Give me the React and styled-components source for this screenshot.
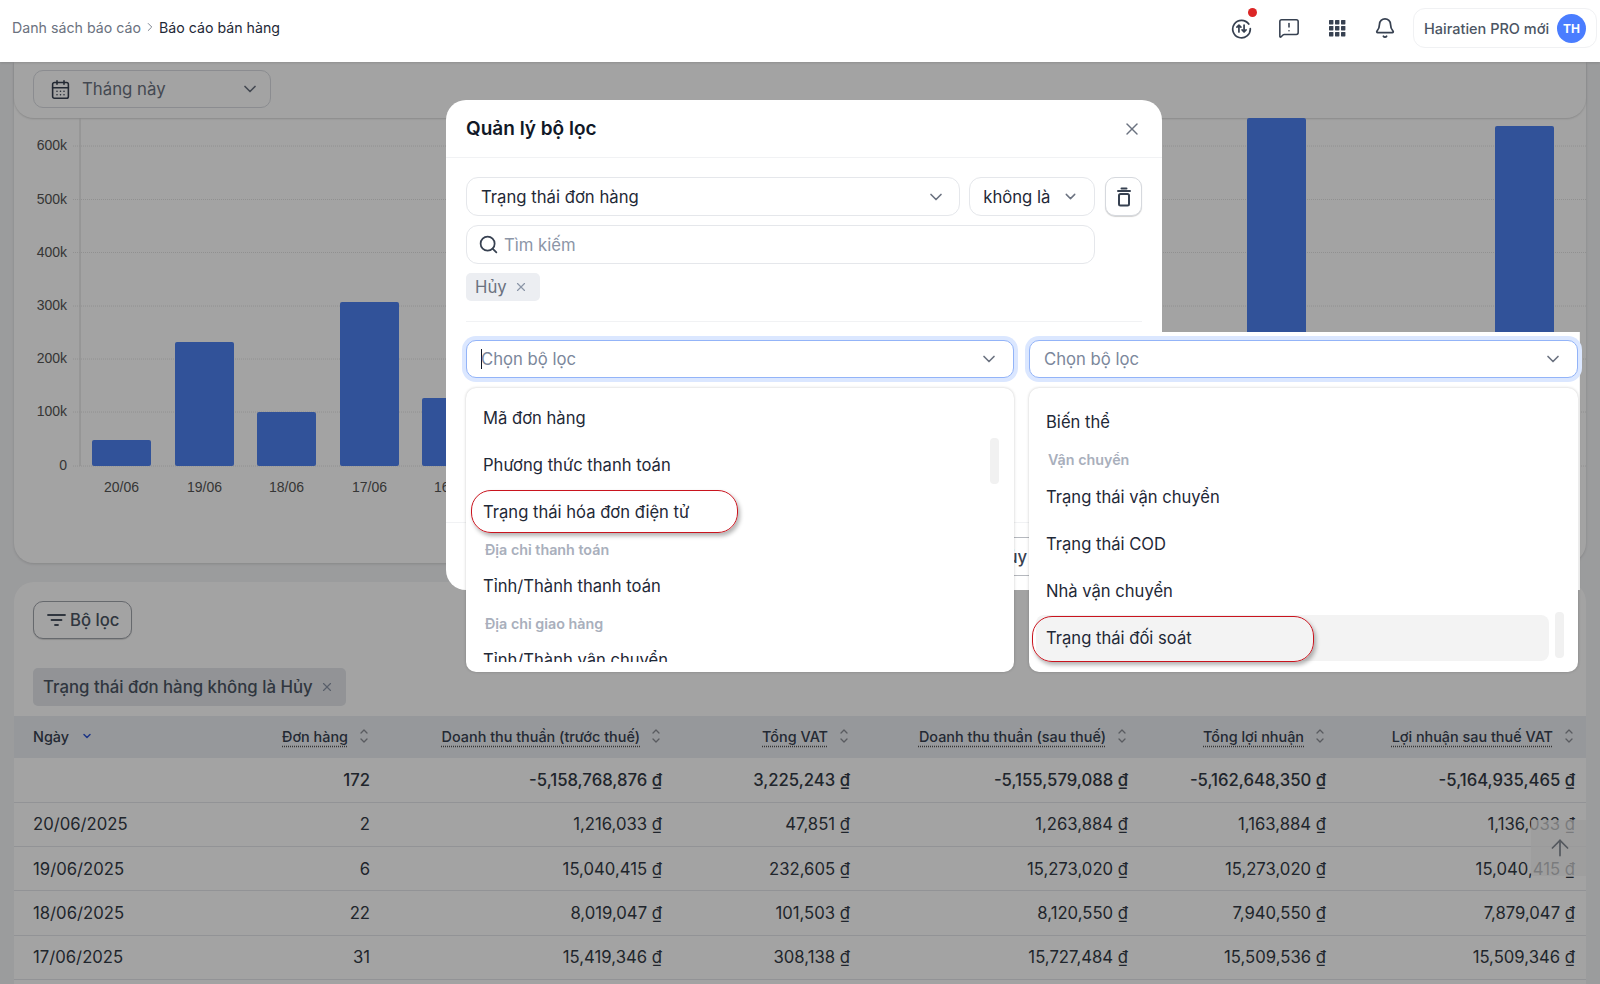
import React from 'react'
import styled, { createGlobalStyle } from 'styled-components'
import { Bell, CalendarDays, ChevronDown, ChevronRight, MessageSquareWarning, Search, X, ArrowUp } from 'lucide-react'

const GlobalStyle = createGlobalStyle`
  html, body {
    margin: 0;
    padding: 0;
    height: 984px;
    overflow: hidden;
    background: #f3f4f6;
    font-family: Inter, "Noto Sans", "Liberation Sans", sans-serif;
    color: #333a45;
  }
  * { box-sizing: border-box; }
`

const Page = styled.div`
  position: relative;
  width: 1600px;
  height: 984px;
  overflow: hidden;
`

const Header = styled.header`
  position: relative;
  z-index: 3;
  height: 62px;
  background: #fff;
  display: flex;
  align-items: center;
  justify-content: space-between;
  padding: 0 3px 6px 12px;
  box-shadow: 0 1px 2px rgba(0, 0, 0, 0.12);
`

const Breadcrumb = styled.nav`
  display: flex;
  align-items: center;
  gap: 2px;
  margin-bottom: 2px;
  font-size: 14.2px;
  color: #6b7280;

  b {
    font-weight: 400;
    color: #1f2937;
  }
`

const HeaderTools = styled.div`
  display: flex;
  align-items: center;
`

const ToolIcon = styled.span`
  position: relative;
  width: 24px;
  height: 24px;
  margin-right: 24px;
  display: flex;
  align-items: center;
  justify-content: center;
  color: #374151;
`

const RedDot = styled.i`
  position: absolute;
  top: -8px;
  right: -4px;
  width: 9px;
  height: 9px;
  border-radius: 50%;
  background: #dc2626;
`

const UserPill = styled.div`
  width: 184px;
  height: 40px;
  margin-left: -8px;
  padding: 0 10px 0 10px;
  display: flex;
  align-items: center;
  justify-content: space-between;
  border: 1px solid #f0f1f3;
  border-radius: 12px;
  font-size: 14.5px;
  font-weight: 500;
  color: #4b5563;
  white-space: nowrap;
`

const Avatar = styled.span`
  width: 29px;
  height: 29px;
  border-radius: 50%;
  background: #4a7dff;
  color: #fff;
  font-size: 12px;
  font-weight: 700;
  display: flex;
  align-items: center;
  justify-content: center;
`

const Content = styled.main`
  padding: 0 14px;
`

const ChartCard = styled.section`
  height: 501px;
  background: #fff;
  border-radius: 0 0 20px 20px;
  box-shadow: 0 1px 3px rgba(0, 0, 0, 0.14);
`

const FilterBar = styled.div`
  height: 56px;
  padding: 8px 19px;
  border-radius: 0 0 20px 20px;
  box-shadow: 0 1px 2px rgba(0, 0, 0, 0.16);
`

const PeriodSelect = styled.div`
  width: 238px;
  height: 38px;
  padding: 0 10px 0 16px;
  display: flex;
  align-items: center;
  gap: 11px;
  border: 1px solid #d9dce1;
  border-radius: 10px;
  font-size: 16.8px;
  color: #6b7280;

  span { flex: 1; }
`

const ChartSvg = styled.svg`
  display: block;
  width: 1572px;
  height: 445px;
`

const TableCard = styled.section`
  margin-top: 19px;
  height: 420px;
  padding-top: 19px;
  background: #fff;
  border-radius: 20px 20px 0 0;
`

const FilterButton = styled.button`
  margin-left: 19px;
  width: 99px;
  height: 38px;
  padding: 0 0 0 13px;
  display: flex;
  align-items: center;
  gap: 3px;
  background: #fff;
  border: 1px solid #a0a4ab;
  border-radius: 10px;
  box-shadow: 0 1px 1px rgba(0, 0, 0, 0.15);
  font: 500 16.7px Inter, sans-serif;
  color: #4b5563;
`

const AppliedChip = styled.div`
  margin: 29px 0 10px 19px;
  width: 313px;
  height: 38px;
  padding: 0 12px 0 10px;
  display: flex;
  align-items: center;
  justify-content: space-between;
  border-radius: 5px;
  background: #e4e7eb;
  font-size: 16.8px;
  font-weight: 500;
  color: #4b5563;
  white-space: nowrap;
`

const columns = '236px 131px 292px 188px 278px 198px 249px'

const HeadRow = styled.div`
  display: grid;
  grid-template-columns: ${columns};
  height: 42px;
  padding-bottom: 2px;
  background: #ebeef2;
  align-items: center;
`

const HeadCell = styled.div`
  padding: 0 13.5px 0 19px;
  display: flex;
  align-items: center;
  justify-content: ${(p) => (p.$left ? 'flex-start' : 'flex-end')};
  gap: ${(p) => (p.$left ? '12px' : '11.5px')};
  font-size: 14.4px;
  font-weight: 500;
  color: #374151;
  white-space: nowrap;

  u {
    text-decoration: underline dotted #555;
    text-underline-offset: 4px;
  }
`

const Row = styled.div`
  display: grid;
  grid-template-columns: ${columns};
  height: ${(p) => (p.$total ? '44.5px' : '44.4px')};
  align-items: center;
  border-bottom: 1px solid #e5e7eb;
`

const Cell = styled.div`
  padding: 0 11px 0 19px;
  text-align: ${(p) => (p.$left ? 'left' : 'right')};
  font-size: 16.7px;
  font-weight: ${(p) => (p.$total ? 500 : 400)};
  color: #333a45;
  white-space: nowrap;
`

const ScrollTop = styled.div`
  position: absolute;
  left: 1531px;
  top: 820px;
  width: 55px;
  height: 56px;
  padding-left: 16px;
  display: flex;
  align-items: center;
  background: rgba(245, 245, 245, 0.72);
  color: #858b94;
`

const Overlay = styled.div`
  position: absolute;
  inset: 62px 0 0 0;
  z-index: 1;
  background: rgba(0, 0, 0, 0.36);
`

const Modal = styled.div`
  position: absolute;
  z-index: 2;
  left: 446px;
  top: 100px;
  width: 716px;
  height: 490px;
  display: flex;
  flex-direction: column;
  background: #fff;
  border-radius: 20px;
`

const ModalHeader = styled.div`
  height: 58px;
  flex: none;
  padding: 0 20px 0 20px;
  display: flex;
  align-items: center;
  justify-content: space-between;
  border-bottom: 1px solid #f1f2f4;
  font-size: 19px;
  font-weight: 600;
  color: #111827;

  svg { color: #6b7280; }
`

const ModalBody = styled.div`
  position: relative;
  z-index: 1;
  padding: 19px 20px 0;
`

const ConditionRow = styled.div`
  display: flex;
  gap: 9px;
`

const Field = styled.div`
  width: ${(p) => p.$width}px;
  height: 39px;
  padding: 0 ${(p) => p.$pr || 13}px 0 ${(p) => p.$pl || 13}px;
  display: flex;
  align-items: center;
  justify-content: space-between;
  background: #fff;
  border: 1px solid #e5e7eb;
  border-radius: 12px;
  font-size: 16.7px;
  color: #1f2937;
  white-space: nowrap;

  svg { color: #6b7280; flex: none; }
`

const TrashButton = styled.button`
  width: 37px;
  height: 39px;
  margin-left: 1px;
  padding: 0;
  display: flex;
  align-items: center;
  justify-content: center;
  background: #fff;
  border: 1px solid #d6d9de;
  border-radius: 10px;
  box-shadow: 0 1px 1px rgba(0, 0, 0, 0.18);
  color: #374151;
`

const SearchField = styled(Field)`
  margin-top: 9px;
  justify-content: flex-start;
  gap: 5px;
  color: #8b95a7;

  svg { color: #374151; }
`

const ValueTag = styled.div`
  margin-top: 9px;
  width: 74px;
  height: 28px;
  padding: 0 12px 0 9px;
  display: flex;
  align-items: center;
  justify-content: space-between;
  border-radius: 5px;
  background: #eceef2;
  font-size: 16.7px;
  color: #6b7280;

  svg { color: #8b95a7; }
`

const Divider = styled.hr`
  margin: 20px 0 18px;
  border: 0;
  border-top: 1px solid #f1f2f4;
`

const PickerRow = styled.div`
  display: flex;
  gap: 15px;
  width: 1112px;
`

const Picker = styled.div`
  position: relative;
  width: ${(p) => p.$width}px;
  flex: none;
`

const PickerField = styled.div`
  height: 38px;
  padding: 0 14px;
  display: flex;
  align-items: center;
  justify-content: space-between;
  background: #fff;
  border: 1.5px solid #93b4f8;
  border-radius: 10px;
  box-shadow: 0 0 0 4px #dbe7ff;
  font-size: 16.7px;
  color: #7b879b;

  svg { color: #6b7280; flex: none; }
`

const Caret = styled.i`
  display: inline-block;
  width: 1px;
  height: 20px;
  margin: 0 -1px -4px 0;
  background: #111827;
`

const Menu = styled.div`
  position: absolute;
  z-index: 2;
  left: 0;
  right: 0;
  top: 48px;
  height: 284px;
  padding: ${(p) => p.$pt}px 0 0;
  overflow: hidden;
  background: #fff;
  border-radius: 10px;
  box-shadow: 0 0 3px rgba(0, 0, 0, 0.22);
`

const MenuList = styled.div`
  height: ${(p) => p.$height}px;
  overflow: hidden;
`

const MenuItem = styled.div`
  position: relative;
  height: 46.9px;
  margin: 0 ${(p) => (p.$active ? '29px' : '0')} 0 ${(p) => (p.$active ? '7px' : '0')};
  padding-left: ${(p) => (p.$active ? '10px' : '17px')};
  display: flex;
  align-items: center;
  border-radius: 8px;
  background: ${(p) => (p.$active ? '#f3f3f3' : 'transparent')};
  font-size: 16.6px;
  color: #1f2937;
`

const MenuGroup = styled.div`
  height: ${(p) => p.$height || 27}px;
  padding-left: 19px;
  display: flex;
  align-items: center;
  font-size: 14.3px;
  font-weight: 600;
  color: #a9afbc;
`

const ScrollThumb = styled.i`
  position: absolute;
  right: ${(p) => p.$right}px;
  top: ${(p) => p.$top}px;
  width: 9px;
  height: 46px;
  border-radius: 4px;
  background: #f1f1f1;
`

const RedMark = styled.i`
  position: absolute;
  left: ${(p) => p.$left}px;
  top: ${(p) => p.$top}px;
  width: ${(p) => p.$width}px;
  height: ${(p) => p.$height}px;
  border: 1.5px solid #c9141e;
  border-radius: 20px;
  box-shadow: 2px 3px 4px rgba(0, 0, 0, 0.3);
  pointer-events: none;
`

const PatchBackdrop = styled.div`
  position: absolute;
  left: 716px;
  top: 232px;
  width: 418px;
  height: 258px;
  background: #fff;
  border-right: 1px solid #f0f0f0;
`

const ModalFooter = styled.div`
  position: absolute;
  left: 0;
  right: 0;
  bottom: 0;
  height: 68px;
  padding: 14px 0 0 530px;
  border-top: 1px solid #f1f2f4;
`

const CancelButton = styled.button`
  width: 70px;
  height: 39px;
  background: #fff;
  border: 1px solid #b5b8be;
  border-radius: 10px;
  font: 500 16.7px Inter, sans-serif;
  color: #374151;
`

const TransferIcon = () => (
  <svg width="21" height="21" viewBox="0 0 22 22" fill="none" stroke="currentColor" strokeWidth="1.8" strokeLinecap="round" strokeLinejoin="round">
    <path d="M18.6 6.4A9.2 9.2 0 1 0 20.2 11" />
    <path d="M8.3 14.6V7.4M6.2 9.5l2.1-2.1 2.1 2.1" />
    <path d="M13.7 7.4v7.2M11.6 12.5l2.1 2.1 2.1-2.1" />
  </svg>
)

const GridIcon = () => (
  <svg width="18" height="18" viewBox="0 0 18 18" fill="currentColor">
    {[1, 7, 13].map((y) => [1, 7, 13].map((x) => <rect key={`${x}-${y}`} x={x} y={y} width="4.4" height="4.4" rx="0.6" />))}
  </svg>
)

const TrashIcon = () => (
  <svg width="18" height="20" viewBox="0 0 18 20" fill="none" stroke="currentColor" strokeWidth="2" strokeLinecap="round" strokeLinejoin="round">
    <path d="M3 4h12M6.5 1.5h5" />
    <rect x="4" y="7" width="10" height="11.5" rx="1.5" />
  </svg>
)

const FunnelLines = () => (
  <svg width="20" height="16" viewBox="0 0 20 16" fill="none" stroke="currentColor" strokeWidth="1.8" strokeLinecap="round">
    <path d="M1 3h17M4.5 8h10M8 13h3" />
  </svg>
)

const SortIcon = () => (
  <svg width="8" height="16" viewBox="0 0 8 16" fill="none" stroke="#8b8f96" strokeWidth="1.3" strokeLinecap="round" strokeLinejoin="round">
    <path d="M1 5l3-3 3 3M1 11l3 3 3-3" />
  </svg>
)

const yTicks = [
  ['600k', 146],
  ['500k', 199.5],
  ['400k', 252.5],
  ['300k', 306],
  ['200k', 359],
  ['100k', 412],
  ['0', 466],
]

const bars = [
  { x: 92, top: 440, label: '20/06' },
  { x: 175, top: 342, label: '19/06' },
  { x: 257, top: 412, label: '18/06' },
  { x: 340, top: 302, label: '17/06' },
  { x: 422, top: 398, label: '16/06' },
  { x: 1247, top: 118 },
  { x: 1495, top: 126 },
]

const SalesChart = () => (
  <ChartSvg viewBox="14 118 1572 445">
    <line x1="80" y1="118" x2="80" y2="466" stroke="#d8d8d8" />
    {yTicks.map(([label, y]) => (
      <g key={label}>
        <line x1="73" y1={y} x2="1586" y2={y} stroke="#e2e2e2" strokeDasharray="1 1" />
        <text x="67" y={y + 4} textAnchor="end" fontFamily="Liberation Sans, sans-serif" fontSize="14" fill="#555">{label}</text>
      </g>
    ))}
    {bars.map((b) => (
      <g key={b.x}>
        <rect x={b.x} y={b.top} width="59" height={466 - b.top} rx="2" fill="#4d80ef" />
        {b.label && (
          <text x={b.x + 29.5} y="491.5" textAnchor="middle" fontFamily="Liberation Sans, sans-serif" fontSize="14" fill="#555">{b.label}</text>
        )}
      </g>
    ))}
  </ChartSvg>
)

const tableHead = ['Đơn hàng', 'Doanh thu thuần (trước thuế)', 'Tổng VAT', 'Doanh thu thuần (sau thuế)', 'Tổng lợi nhuận', 'Lợi nhuận sau thuế VAT']

const tableRows = [
  ['', '172', '-5,158,768,876 ₫', '3,225,243 ₫', '-5,155,579,088 ₫', '-5,162,648,350 ₫', '-5,164,935,465 ₫'],
  ['20/06/2025', '2', '1,216,033 ₫', '47,851 ₫', '1,263,884 ₫', '1,163,884 ₫', '1,136,033 ₫'],
  ['19/06/2025', '6', '15,040,415 ₫', '232,605 ₫', '15,273,020 ₫', '15,273,020 ₫', '15,040,415 ₫'],
  ['18/06/2025', '22', '8,019,047 ₫', '101,503 ₫', '8,120,550 ₫', '7,940,550 ₫', '7,879,047 ₫'],
  ['17/06/2025', '31', '15,419,346 ₫', '308,138 ₫', '15,727,484 ₫', '15,509,536 ₫', '15,509,346 ₫'],
]

export default function App() {
  return (
    <Page>
      <GlobalStyle />
      <Header>
        <Breadcrumb>
          Danh sách báo cáo <ChevronRight size={14} strokeWidth={1.5} /> <b>Báo cáo bán hàng</b>
        </Breadcrumb>
        <HeaderTools>
          <ToolIcon>
            <TransferIcon />
            <RedDot />
          </ToolIcon>
          <ToolIcon><MessageSquareWarning size={22} strokeWidth={1.7} /></ToolIcon>
          <ToolIcon><GridIcon /></ToolIcon>
          <ToolIcon><Bell size={22} strokeWidth={1.9} /></ToolIcon>
          <UserPill>
            Hairatien PRO mới
            <Avatar>TH</Avatar>
          </UserPill>
        </HeaderTools>
      </Header>

      <Content>
        <ChartCard>
          <FilterBar>
            <PeriodSelect>
              <CalendarDays size={21} strokeWidth={1.8} color="#374151" />
              <span>Tháng này</span>
              <ChevronDown size={20} strokeWidth={2} color="#6b7280" />
            </PeriodSelect>
          </FilterBar>
          <SalesChart />
        </ChartCard>

        <TableCard>
          <FilterButton>
            <FunnelLines />
            Bộ lọc
          </FilterButton>
          <AppliedChip>
            Trạng thái đơn hàng không là Hủy
            <X size={14} color="#8b95a7" />
          </AppliedChip>
          <HeadRow>
            <HeadCell $left>
              Ngày
              <ChevronDown size={12} strokeWidth={3} color="#2f55d4" />
            </HeadCell>
            {tableHead.map((title) => (
              <HeadCell key={title}>
                <u>{title}</u>
                <SortIcon />
              </HeadCell>
            ))}
          </HeadRow>
          {tableRows.map((row, i) => (
            <Row key={i} $total={i === 0}>
              {row.map((value, c) => (
                <Cell key={c} $left={c === 0} $total={i === 0}>{value}</Cell>
              ))}
            </Row>
          ))}
        </TableCard>
      </Content>

      <ScrollTop><ArrowUp size={26} strokeWidth={1.6} /></ScrollTop>
      <Overlay />

      <Modal>
        <ModalHeader>
          Quản lý bộ lọc
          <X size={20} strokeWidth={1.7} />
        </ModalHeader>
        <PatchBackdrop />
        <ModalFooter>
          <CancelButton>Hủy</CancelButton>
        </ModalFooter>
        <ModalBody>
          <ConditionRow>
            <Field $width={495} $pl={14}>
              Trạng thái đơn hàng
              <ChevronDown size={20} strokeWidth={2} />
            </Field>
            <Field $width={126} $pr={15}>
              không là
              <ChevronDown size={17} strokeWidth={2} />
            </Field>
            <TrashButton><TrashIcon /></TrashButton>
          </ConditionRow>
          <SearchField $width={629} $pl={11} as="div">
            <Search size={21} strokeWidth={2} />
            Tìm kiếm
          </SearchField>
          <ValueTag>
            Hủy
            <X size={14} strokeWidth={2} />
          </ValueTag>
          <Divider />
          <PickerRow>
            <Picker $width={548}>
              <PickerField>
                <span><Caret />Chọn bộ lọc</span>
                <ChevronDown size={20} strokeWidth={2} />
              </PickerField>
              <Menu $pt={7}>
                <MenuList $height={267}>
                  <MenuItem>Mã đơn hàng</MenuItem>
                  <MenuItem>Phương thức thanh toán</MenuItem>
                  <MenuItem>Trạng thái hóa đơn điện tử</MenuItem>
                  <MenuGroup>Địa chỉ thanh toán</MenuGroup>
                  <MenuItem>Tỉnh/Thành thanh toán</MenuItem>
                  <MenuGroup>Địa chỉ giao hàng</MenuGroup>
                  <MenuItem>Tỉnh/Thành vận chuyển</MenuItem>
                </MenuList>
                <ScrollThumb $right={15} $top={50} />
                <RedMark $left={5} $top={102} $width={267} $height={43} />
              </Menu>
            </Picker>
            <Picker $width={549}>
              <PickerField>
                Chọn bộ lọc
                <ChevronDown size={20} strokeWidth={2} />
              </PickerField>
              <Menu $pt={11}>
                <MenuItem>Biến thể</MenuItem>
                <MenuGroup $height={28}>Vận chuyển</MenuGroup>
                <MenuItem>Trạng thái vận chuyển</MenuItem>
                <MenuItem>Trạng thái COD</MenuItem>
                <MenuItem>Nhà vận chuyển</MenuItem>
                <MenuItem $active>Trạng thái đối soát</MenuItem>
                <ScrollThumb $right={14} $top={224} />
                <RedMark $left={3} $top={228} $width={282} $height={46} />
              </Menu>
            </Picker>
          </PickerRow>
        </ModalBody>
      </Modal>
    </Page>
  )
}
